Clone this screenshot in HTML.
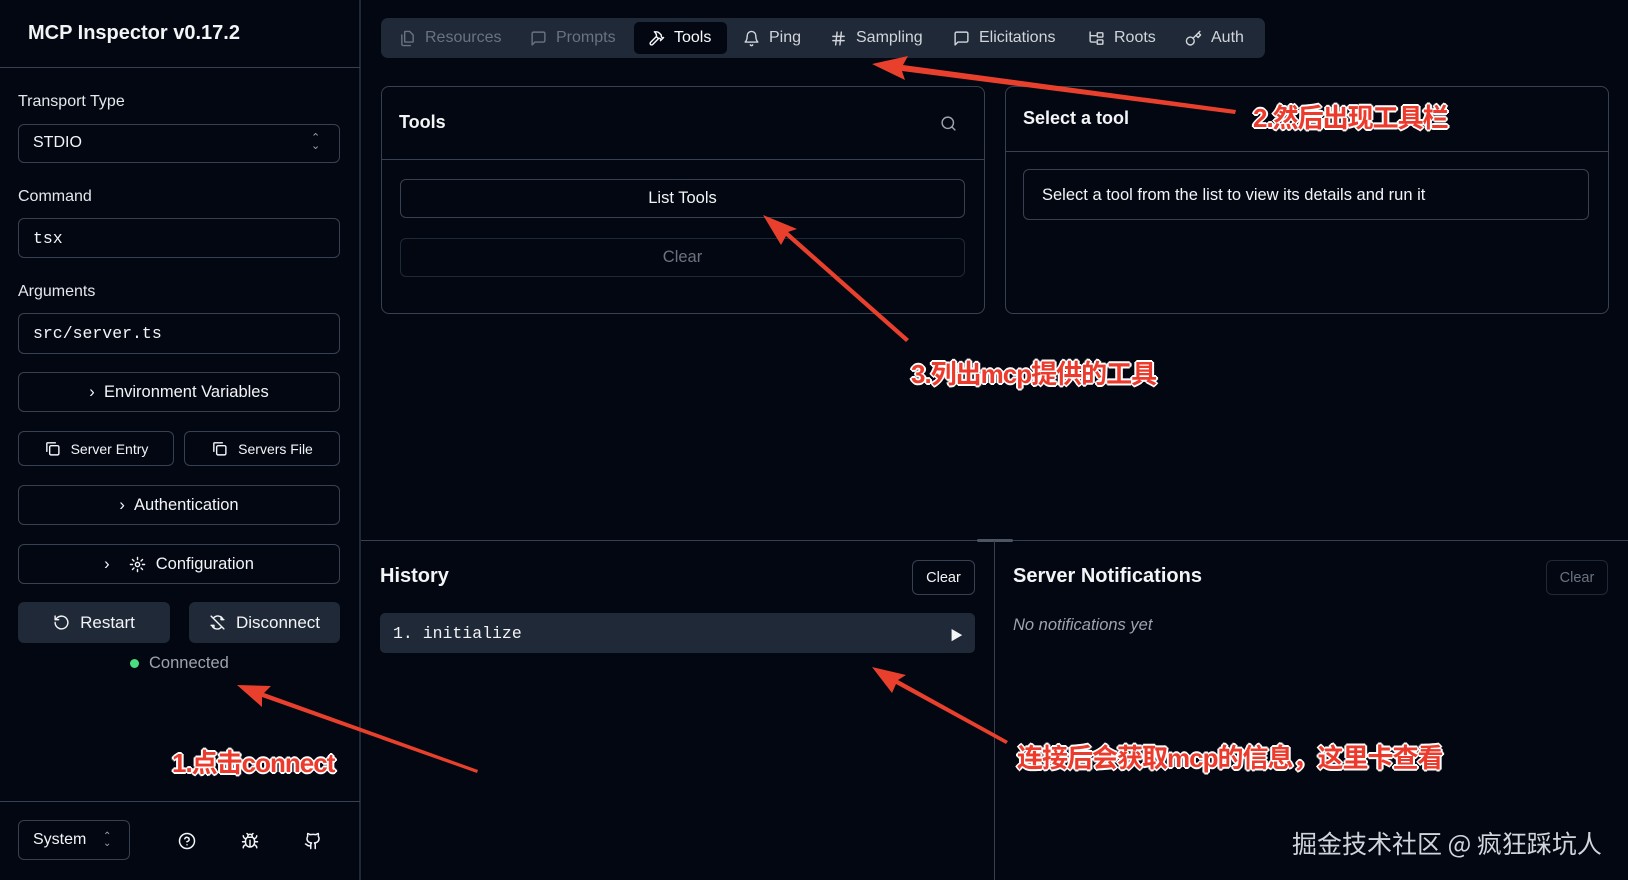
<!DOCTYPE html>
<html><head><meta charset="utf-8"><style>
*{box-sizing:border-box;margin:0;padding:0}
body{width:1628px;height:880px;background:#030712;color:#f3f4f6;font-family:"Liberation Sans","Noto Sans CJK SC",sans-serif;position:relative;overflow:hidden;font-size:16px}
.a{position:absolute}
.box{position:absolute;border:1px solid #374151;border-radius:6px}
.btn{position:absolute;border:1px solid #374151;border-radius:6px;display:flex;align-items:center;justify-content:center;gap:10px;font-size:16.5px;color:#f3f4f6}
.lbl{position:absolute;left:18px;font-size:16px;font-weight:500;color:#e5e7eb}
.mono{font-family:"Liberation Mono",monospace;font-size:16.5px}
svg.i{width:17px;height:17px;fill:none;stroke:currentColor;stroke-width:2;stroke-linecap:round;stroke-linejoin:round}
.tab{position:absolute;top:24px;height:28px;display:flex;align-items:center;gap:9px;font-size:16px;color:#6b7280}
.ann{position:absolute;color:#ec3b2c;font-weight:bold;font-size:26px;letter-spacing:-1px;text-shadow:-2px 0 #fff,2px 0 #fff,0 -2px #fff,0 2px #fff,-1px -1px #fff,1px 1px #fff,-1px 1px #fff,1px -1px #fff;font-family:"Liberation Sans","Noto Sans CJK SC",sans-serif}
</style></head><body>
<!-- sidebar -->
<div class="a" style="left:359px;top:0;width:2px;height:880px;background:#1f2937"></div>
<div class="a" style="left:0;top:67px;width:360px;height:1px;background:#374151"></div>
<div class="a" style="left:28px;top:22px;font-size:20px;font-weight:600">MCP Inspector v0.17.2</div>
<div class="lbl" style="top:93px">Transport Type</div>
<div class="box" style="left:18px;top:124px;width:322px;height:39px"></div>
<div class="a" style="left:33px;top:134px;font-size:16px">STDIO</div>
<div class="a" style="left:311px;top:134px;font-size:11px;color:#9ca3af;line-height:8px">⌃<br>⌄</div>
<div class="lbl" style="top:188px">Command</div>
<div class="box" style="left:18px;top:218px;width:322px;height:40px"></div>
<div class="a mono" style="left:33px;top:229px">tsx</div>
<div class="lbl" style="top:283px">Arguments</div>
<div class="box" style="left:18px;top:313px;width:322px;height:41px"></div>
<div class="a mono" style="left:33px;top:324px">src/server.ts</div>
<div class="btn" style="left:18px;top:372px;width:322px;height:40px;font-weight:500">› &nbsp;Environment Variables</div>
<div class="btn" style="left:18px;top:431px;width:156px;height:35px;font-size:14px"><svg class="i" viewBox="0 0 24 24"><rect x="8" y="8" width="13" height="13" rx="2"/><path d="M4 16V5a1 1 0 0 1 1-1h11"/></svg>Server Entry</div>
<div class="btn" style="left:184px;top:431px;width:156px;height:35px;font-size:14px"><svg class="i" viewBox="0 0 24 24"><rect x="8" y="8" width="13" height="13" rx="2"/><path d="M4 16V5a1 1 0 0 1 1-1h11"/></svg>Servers File</div>
<div class="btn" style="left:18px;top:485px;width:322px;height:40px;font-weight:500">› &nbsp;Authentication</div>
<div class="btn" style="left:18px;top:544px;width:322px;height:40px;font-weight:500">› &nbsp;<svg class="i" viewBox="0 0 24 24"><circle cx="12" cy="12" r="3"/><path d="M12 2v3M12 19v3M2 12h3M19 12h3M4.9 4.9l2.1 2.1M17 17l2.1 2.1M4.9 19.1L7 17M17 7l2.1-2.1"/></svg>Configuration</div>
<div class="btn" style="left:18px;top:602px;width:152px;height:41px;background:#1f2937;border:none;font-size:17px;font-weight:500"><svg class="i" viewBox="0 0 24 24"><path d="M3 12a9 9 0 1 0 3-6.7L3 8"/><path d="M3 3v5h5"/></svg>Restart</div>
<div class="btn" style="left:189px;top:602px;width:151px;height:41px;background:#1f2937;border:none;font-size:17px;font-weight:500"><svg class="i" viewBox="0 0 24 24"><path d="M3 3l18 18M20 8a8 8 0 0 0-13-3M4 16a8 8 0 0 0 13 3M17 4v4h4M7 20v-4H3"/></svg>Disconnect</div>
<div class="a" style="left:130px;top:659px;width:9px;height:9px;border-radius:50%;background:#4ade80"></div>
<div class="a" style="left:149px;top:654px;font-size:16.5px;color:#9ca3af">Connected</div>
<div class="a" style="left:0;top:801px;width:360px;height:1px;background:#374151"></div>
<div class="box" style="left:18px;top:820px;width:112px;height:40px"></div>
<div class="a" style="left:33px;top:831px;font-size:16px">System</div>
<div class="a" style="left:103px;top:833px;font-size:10px;color:#9ca3af;line-height:7px">⌃<br>⌄</div>
<svg class="i a" style="left:178px;top:832px;width:18px;height:18px" viewBox="0 0 24 24"><circle cx="12" cy="12" r="10"/><path d="M9.1 9a3 3 0 0 1 5.8 1c0 2-3 3-3 3M12 17h.01"/></svg>
<svg class="i a" style="left:241px;top:832px;width:18px;height:18px" viewBox="0 0 24 24"><path d="M8 2l1.9 1.9M16 2l-1.9 1.9M9 7.1V6a3 3 0 0 1 6 0v1.1"/><path d="M12 20c-3.3 0-6-2.7-6-6v-3a4 4 0 0 1 4-4h4a4 4 0 0 1 4 4v3c0 3.3-2.7 6-6 6zM12 20v-9M6 13H2M22 13h-4M3 21c0-2.1 1.700-3.9 3.8-4M21 21c0-2.1-1.7-3.9-3.8-4M3 5c0 2.1 1.8 4 4 4M21 5c0 2.1-1.8 4-4 4"/></svg>
<svg class="i a" style="left:304px;top:832px;width:18px;height:18px" viewBox="0 0 24 24"><path d="M15 22v-4a4.8 4.8 0 0 0-1-3.5c3 0 6-2 6-5.5.1-1.3-.3-2.5-1-3.5.3-1.2.3-2.4 0-3.5 0 0-1 0-3 1.5-2.6-.5-5.4-.5-8 0C6 2 5 2 5 2c-.3 1.1-.3 2.3 0 3.5A5.4 5.4 0 0 0 4 9c0 3.5 3 5.5 6 5.5-.4.5-.7 1.1-.8 1.7-.2.6-.2 1.2-.2 1.8v4M9 18c-4.5 2-5-2-7-2"/></svg>

<!-- tabs -->
<div class="a" style="left:381px;top:18px;width:884px;height:40px;background:#1f2937;border-radius:7px"></div>
<div class="a" style="left:634px;top:22px;width:93px;height:32px;background:#030712;border-radius:5px"></div>
<div class="tab" style="left:399px"><svg class="i" viewBox="0 0 24 24"><path d="M15 2H9a1 1 0 0 0-1 1v13a1 1 0 0 0 1 1h10a1 1 0 0 0 1-1V7z"/><path d="M4 7v13a2 2 0 0 0 2 2h10"/></svg>Resources</div>
<div class="tab" style="left:530px"><svg class="i" viewBox="0 0 24 24"><path d="M21 15a2 2 0 0 1-2 2H7l-4 4V5a2 2 0 0 1 2-2h14a2 2 0 0 1 2 2z"/></svg>Prompts</div>
<div class="tab" style="left:648px;color:#f9fafb"><svg class="i" viewBox="0 0 24 24"><path d="M15 12l-8.4 8.4a2.1 2.1 0 0 1-3-3L12 9M17.6 15L22 10.6M20.9 11.7l-1.3-1.3c-.6-.6-.9-1.3-.9-2.1V7l-2.6-2.6A6 6 0 0 0 11.9 2.5H9l.9.9A6.6 6.6 0 0 1 12 8.1v1.4l2 2h1.2c.8 0 1.6.3 2.1.9l1.3 1.3"/></svg>Tools</div>
<div class="tab" style="left:743px;color:#d1d5db"><svg class="i" viewBox="0 0 24 24"><path d="M6 8a6 6 0 0 1 12 0c0 7 3 9 3 9H3s3-2 3-9M10.3 21a1.9 1.9 0 0 0 3.4 0"/></svg>Ping</div>
<div class="tab" style="left:830px;color:#d1d5db"><svg class="i" viewBox="0 0 24 24"><path d="M4 9h16M4 15h16M10 3L8 21M16 3l-2 18"/></svg>Sampling</div>
<div class="tab" style="left:953px;color:#d1d5db"><svg class="i" viewBox="0 0 24 24"><path d="M21 15a2 2 0 0 1-2 2H7l-4 4V5a2 2 0 0 1 2-2h14a2 2 0 0 1 2 2z"/></svg>Elicitations</div>
<div class="tab" style="left:1088px;color:#d1d5db"><svg class="i" viewBox="0 0 24 24"><path d="M3 3v12a2 2 0 0 0 2 2h6M3 8h8"/><rect x="13" y="4" width="8" height="6" rx="1"/><rect x="13" y="14" width="8" height="6" rx="1"/></svg>Roots</div>
<div class="tab" style="left:1185px;color:#d1d5db"><svg class="i" viewBox="0 0 24 24"><circle cx="7.5" cy="15.5" r="5.5"/><path d="M21 2l-9.6 9.6M15.5 7.5l3 3L22 7l-3-3"/></svg>Auth</div>

<!-- tools panel -->
<div class="box" style="left:381px;top:86px;width:604px;height:228px;border-radius:8px"></div>
<div class="a" style="left:381px;top:159px;width:604px;height:1px;background:#374151"></div>
<div class="a" style="left:399px;top:112px;font-size:18px;font-weight:600">Tools</div>
<svg class="i a" style="left:940px;top:115px;width:17px;height:17px;color:#9ca3af" viewBox="0 0 24 24"><circle cx="11" cy="11" r="8"/><path d="M21 21l-4.3-4.3"/></svg>
<div class="btn" style="left:400px;top:179px;width:565px;height:39px;font-weight:500">List Tools</div>
<div class="btn" style="left:400px;top:238px;width:565px;height:39px;color:#6b7280;border-color:#1f2937">Clear</div>
<div class="box" style="left:1005px;top:86px;width:604px;height:228px;border-radius:8px"></div>
<div class="a" style="left:1005px;top:151px;width:604px;height:1px;background:#374151"></div>
<div class="a" style="left:1023px;top:108px;font-size:18px;font-weight:600">Select a tool</div>
<div class="box" style="left:1023px;top:169px;width:566px;height:51px"></div>
<div class="a" style="left:1042px;top:186px;font-size:16.5px">Select a tool from the list to view its details and run it</div>

<!-- bottom -->
<div class="a" style="left:361px;top:540px;width:1267px;height:1px;background:#374151"></div>
<div class="a" style="left:977px;top:539px;width:36px;height:3px;border-radius:2px;background:#4b5563"></div>
<div class="a" style="left:994px;top:541px;width:1px;height:339px;background:#374151"></div>
<div class="a" style="left:380px;top:565px;font-size:20px;font-weight:600">History</div>
<div class="btn" style="left:912px;top:560px;width:63px;height:35px;font-size:14.5px;font-weight:500">Clear</div>
<div class="a" style="left:380px;top:613px;width:595px;height:40px;background:#1f2937;border-radius:5px"></div>
<div class="a mono" style="left:393px;top:624px">1. initialize</div>
<div class="a" style="left:950px;top:625px;font-size:13px">▶</div>
<div class="a" style="left:1013px;top:565px;font-size:20px;font-weight:600">Server Notifications</div>
<div class="btn" style="left:1546px;top:560px;width:62px;height:35px;font-size:14.5px;color:#6b7280;border-color:#1f2937">Clear</div>
<div class="a" style="left:1013px;top:616px;font-size:16.5px;font-style:italic;color:#9ca3af">No notifications yet</div>
<div class="a" style="left:1292px;top:825px;font-size:25px;color:#d1d5db;font-family:'Noto Sans CJK SC','Liberation Sans',sans-serif">掘金技术社区 @ 疯狂踩坑人</div>

<!-- annotations -->
<svg class="a" style="left:0;top:0" width="1628" height="880">
<g fill="#e8402c" stroke="none">
<polygon points="872,64 908,56 903,65 1236,110 1235,114 902,71 905,80"/>
<polygon points="763,215 797,229 788,232 909,339 906,342 786,236 781,245"/>
<polygon points="237,685 271,686 264,693 478,770 477,773 262,697 262,707"/>
<polygon points="872,667 906,675 898,680 1008,741 1006,744 896,684 892,693"/>
</g></svg>
<div class="ann" style="left:1253px;top:98px">2.然后出现工具栏</div>
<div class="ann" style="left:911px;top:354px">3.列出mcp提供的工具</div>
<div class="ann" style="left:172px;top:743px">1.点击connect</div>
<div class="ann" style="left:1017px;top:738px">连接后会获取mcp的信息，这里卡查看</div>
</body></html>
